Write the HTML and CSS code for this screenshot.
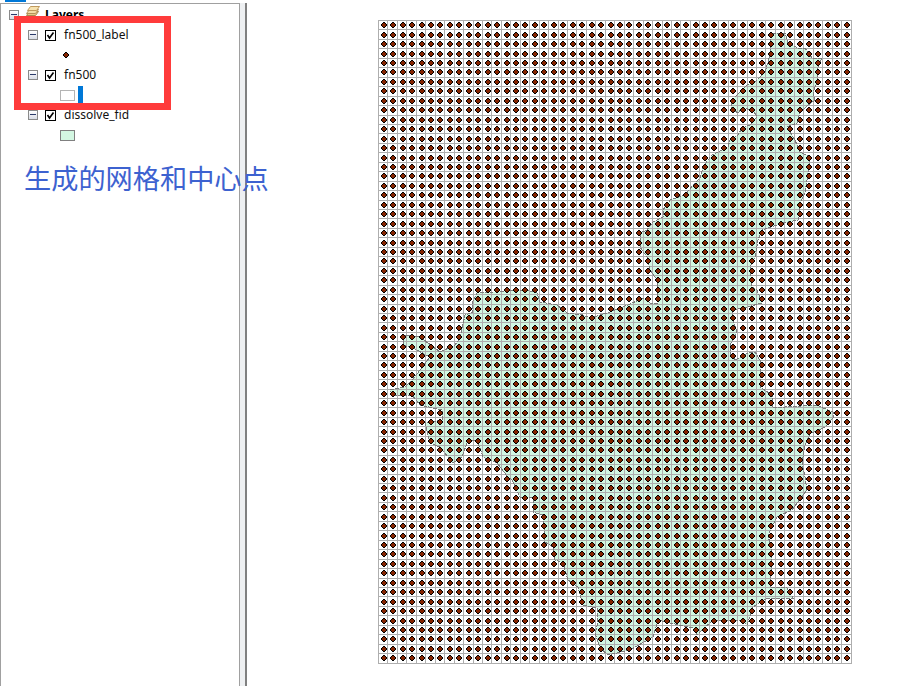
FILE: index.html
```html
<!DOCTYPE html>
<html lang="zh">
<head>
<meta charset="utf-8">
<title>Layers</title>
<link rel="stylesheet" href="styles.css">
</head>
<body>
<div class="app">
  <aside class="toc">
    <div class="toc-tab"></div>
    <div class="toc-panel">
      <div class="row row-root">
        <span class="expander"></span>
        <svg class="layers-icon" width="16" height="12" viewBox="0 0 16 12">
          <path d="M4.500 6.500h9l-3 4h-9z" fill="#e8c98a" stroke="#a98a50"/>
          <path d="M4.500 4.500h9l-3 4h-9z" fill="#f3dca6" stroke="#b4925a"/>
          <path d="M5.500 1.500h9l-3 4h-9z" fill="#f7e3b0" stroke="#c09a5e"/>
        </svg>
        <span class="root-label">Layers</span>
      </div>

      <div class="row row-layer">
        <span class="expander"></span>
        <svg class="check" width="11" height="11" viewBox="0 0 11 11"><rect x="0.500" y="0.500" width="10" height="10" fill="#fff" stroke="#000"/><path d="M2.500 5l2 3 4-5.500" fill="none" stroke="#000" stroke-width="1.600"/></svg>
        <span class="layer-label">fn500_label</span>
      </div>
      <div class="row row-symbol">
        <svg class="point" width="6" height="6" viewBox="0 0 6 6" shape-rendering="crispEdges"><path d="M2 0h2v1h1v1h1v2h-1v1h-1v1h-2v-1h-1v-1h-1v-2h1v-1h1z" fill="#000"/><path d="M2 1h2v1h1v2h-1v1h-2v-1h-1v-2h1z" fill="#852400"/></svg>
      </div>

      <div class="row row-layer">
        <span class="expander"></span>
        <svg class="check" width="11" height="11" viewBox="0 0 11 11"><rect x="0.500" y="0.500" width="10" height="10" fill="#fff" stroke="#000"/><path d="M2.500 5l2 3 4-5.500" fill="none" stroke="#000" stroke-width="1.600"/></svg>
        <span class="layer-label">fn500</span>
      </div>
      <div class="row row-symbol">
        <span class="patch patch-grid"></span>
      </div>

      <div class="row row-layer">
        <span class="expander"></span>
        <svg class="check" width="11" height="11" viewBox="0 0 11 11"><rect x="0.500" y="0.500" width="10" height="10" fill="#fff" stroke="#000"/><path d="M2.500 5l2 3 4-5.500" fill="none" stroke="#000" stroke-width="1.600"/></svg>
        <span class="layer-label">dissolve_fid</span>
      </div>
      <div class="row row-symbol">
        <span class="patch patch-area"></span>
      </div>
    </div>
    <div class="splitter"></div>
    <div class="highlight"></div>
    <div class="cursor-bar"></div>
    <div class="caption">生成的网格和中心点</div>
  </aside>

  <main class="map">
    <svg id="map-svg" class="map-svg" width="475" height="644" viewBox="378 20 475 644">
      <polygon id="area-fill" class="area-fill" points="770,43 772,33 785,33 788,43 798,48 805,48 812,58 822,58 818,67 817,83 813,92 815,100 808,105 800,113 797,123 787,127 795,140 800,152 810,157 808,173 805,193 800,203 798,220 783,223 762,230 758,240 755,257 750,267 752,287 757,290 762,303 747,307 732,310 733,320 737,332 730,345 730,353 735,360 748,353 755,352 760,360 760,387 772,395 773,408 785,407 817,405 823,408 833,412 833,418 825,427 810,434 805,445 802,463 805,477 807,490 792,510 777,517 768,535 772,553 770,587 787,588 793,598 767,598 753,607 747,625 742,620 713,620 697,635 693,628 670,623 658,620 653,637 630,650 608,655 600,648 595,633 598,623 597,608 583,605 578,587 568,580 563,563 555,560 553,547 545,542 543,515 533,512 533,498 520,497 512,480 508,477 497,463 483,457 477,440 468,440 462,457 453,463 440,447 430,443 425,423 442,420 442,410 420,405 412,395 393,395 390,390 405,387 412,380 420,370 430,357 413,348 403,345 405,335 420,337 440,352 455,345 460,338 465,315 473,312 472,303 477,293 527,290 537,293 540,302 557,305 567,313 583,315 590,318 610,312 628,305 643,298 650,303 658,303 657,280 650,270 647,257 640,247 640,233 647,230 653,222 663,217 663,210 670,200 685,195 693,185 700,178 703,167 712,155 728,147 730,140 738,135 742,128 750,125 757,117 753,110 742,108 738,113 731,108 732,100 747,85 755,82 765,72 768,62 770,55"/>
    </svg>
  </main>
</div>
<script src="grid.js"></script>
</body>
</html>
```

FILE: styles.css
```css
* { box-sizing: border-box; }
html, body { margin: 0; padding: 0; background: #fff; }
body { width: 899px; height: 686px; overflow: hidden; font-family: "Noto Sans", "Liberation Sans", sans-serif; }

.app { display: flex; height: 686px; }

.toc { position: relative; flex: 0 0 247px; display: flex; padding-top: 3px; }
.toc-tab { position: absolute; left: 5px; top: 0; width: 21px; height: 2px; background: #0078d7; }
.toc-panel { flex: 0 0 240px; border: 1px solid #a0a0a0; border-bottom: 0; background: #fff; }
.splitter { flex: 0 0 7px; background: #eef0f2; border-right: 2px solid #808080; }

.row { display: flex; align-items: center; height: 20px; }
.row-root { padding-left: 8px; }
.row-layer { padding-left: 27px; }
.row-symbol { padding-left: 59px; }

.expander { position: relative; flex: 0 0 10px; height: 10px; margin-top: 2px; border: 1px solid #8a8a8a; background: linear-gradient(#fff, #d8dce6); }
.expander::after { content: ""; position: absolute; left: 1px; right: 1px; top: 3px; height: 1px; background: #2a3a6a; }

.layers-icon { margin-left: 6px; margin-top: -6px; }
.root-label { margin-left: 4px; font-size: 12px; font-weight: 700; color: #000; }

.check { margin-left: 7px; margin-top: 2px; }
.layer-label { margin-left: 8px; font-size: 12px; color: #111; white-space: nowrap; }

.point { margin-left: 3px; margin-top: 2px; }
.patch { width: 15px; height: 11px; margin-top: 3px; border: 1px solid #808080; }
.patch-grid { background: #fff; border-color: #b4b4b4; }
.patch-area { background: #d3f7e2; }

.highlight { position: absolute; left: 14px; top: 16px; width: 157px; height: 94px; border: 7px solid #ff3b3b; }
.cursor-bar { position: absolute; left: 78px; top: 86px; width: 5px; height: 17px; background: #0078d7; }
.caption { position: absolute; left: 24px; top: 157px; font-family: "Noto Sans CJK SC", "Noto Sans", sans-serif; font-size: 27.200px; line-height: 40px; color: #3d62d0; white-space: nowrap; }

.map { flex: 1 1 auto; padding: 20px 0 0 131px; }
.map-svg { display: block; }
.area-fill { fill: #d3f7e2; stroke: none; }
.area-line { fill: none; stroke: #7c7c7c; stroke-width: 1; stroke-dasharray: 4 1; shape-rendering: crispEdges; }
.grid-line { fill: none; stroke: #aeaeae; stroke-width: 1; shape-rendering: crispEdges; }
.dot-edge { fill: #000; shape-rendering: crispEdges; }
.dot-core { fill: #852400; shape-rendering: crispEdges; }
```

FILE: grid.js
```js
(function () {
  var NS = "http://www.w3.org/2000/svg";
  var svg = document.getElementById("map-svg");
  var area = document.getElementById("area-fill");
  var COLS = 50, ROWS = 68, PITCH = 9.45, X0 = 378, Y0 = 20;

  function add(cls, d) {
    var p = document.createElementNS(NS, "path");
    p.setAttribute("class", cls);
    p.setAttribute("d", d);
    svg.appendChild(p);
  }

  var lines = "", edge = "", core = "", i, j;
  var w = Math.round(COLS * PITCH) + 1, h = Math.round(ROWS * PITCH) + 1;
  for (i = 0; i <= COLS; i++) {
    lines += "M" + (Math.round(X0 + i * PITCH) + 0.5) + " " + Y0 + "v" + h;
  }
  for (j = 0; j <= ROWS; j++) {
    lines += "M" + X0 + " " + (Math.round(Y0 + j * PITCH) + 0.5) + "h" + w;
  }
  add("grid-line", lines);

  var outline = document.createElementNS(NS, "polygon");
  outline.setAttribute("class", "area-line");
  outline.setAttribute("points", area.getAttribute("points"));
  svg.appendChild(outline);

  var DOT_EDGE = "h2v1h1v1h1v2h-1v1h-1v1h-2v-1h-1v-1h-1v-2h1v-1h1z";
  var DOT_CORE = "h2v1h1v2h-1v1h-2v-1h-1v-2h1z";
  for (j = 0; j < ROWS; j++) {
    for (i = 0; i < COLS; i++) {
      var cx = Math.round(X0 + (i + 0.5) * PITCH);
      var cy = Math.round(Y0 + (j + 0.5) * PITCH + 0.5);
      edge += "M" + cx + " " + (cy - 3) + DOT_EDGE;
      core += "M" + cx + " " + (cy - 2) + DOT_CORE;
    }
  }
  add("dot-edge", edge);
  add("dot-core", core);
})();
```
